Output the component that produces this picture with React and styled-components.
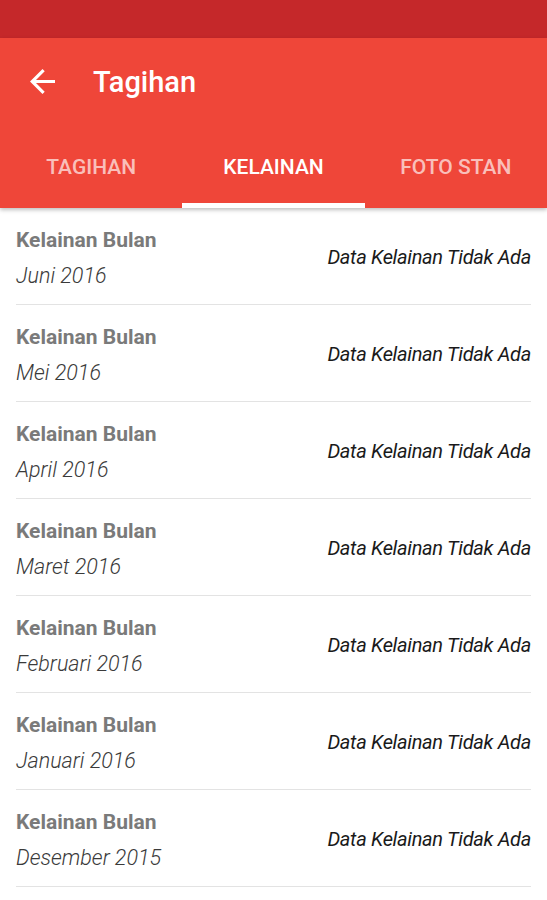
import React from 'react'
import styled, { createGlobalStyle } from 'styled-components'

const GlobalStyle = createGlobalStyle`
  body {
    margin: 0;
    background: #ffffff;
    font-family: Roboto, "Noto Sans", sans-serif;
  }
`

const Screen = styled.div`
  width: 547px;
  height: 900px;
  display: flex;
  flex-direction: column;
  background: #ffffff;
  overflow: hidden;
`

const StatusBar = styled.div`
  height: 38px;
  background: #c5282a;
  flex-shrink: 0;
`

const AppBar = styled.div`
  background: #ef4639;
  display: flex;
  flex-direction: column;
  box-shadow: 0 2px 4px rgba(0, 0, 0, 0.25);
  position: relative;
  z-index: 1;
`

const Toolbar = styled.div`
  height: 86px;
  display: flex;
  align-items: center;
  padding-left: 30px;
  gap: 38px;
`

const BackButton = styled.div`
  width: 25px;
  height: 25px;
  display: flex;
  align-items: center;
  justify-content: center;
  margin-top: 1px;
`

const Title = styled.h1`
  margin: 0;
  font-size: 29px;
  font-weight: 500;
  color: #ffffff;
  margin-top: 2px;
`

const Tabs = styled.div`
  display: grid;
  grid-template-columns: repeat(3, 1fr);
  height: 84px;
`

const Tab = styled.div`
  display: flex;
  align-items: center;
  justify-content: center;
  font-size: 21px;
  font-weight: 500;
  color: ${p => (p.$active ? '#ffffff' : 'rgba(255, 255, 255, 0.68)')};
  border-bottom: 5px solid ${p => (p.$active ? '#ffffff' : 'transparent')};
  padding-top: 6px;
`

const List = styled.div`
  display: flex;
  flex-direction: column;
  padding: 0 16px;
`

const Row = styled.div`
  height: 96px;
  display: flex;
  align-items: center;
  justify-content: space-between;
  border-bottom: 1px solid #e3e3e3;
`

const Month = styled.div`
  display: flex;
  flex-direction: column;
  gap: 11px;
  margin-top: 3px;
`

const Label = styled.div`
  font-size: 21px;
  font-weight: 700;
  color: #7a7a7a;
`

const Period = styled.div`
  font-size: 21.5px;
  font-weight: 300;
  font-style: italic;
  color: #3a3a3a;
`

const Status = styled.div`
  font-size: 20px;
  font-style: italic;
  color: #1a1a1a;
  letter-spacing: -0.3px;
  margin-top: 1px;
`

const months = [
  'Juni 2016',
  'Mei 2016',
  'April 2016',
  'Maret 2016',
  'Februari 2016',
  'Januari 2016',
  'Desember 2015',
]

const App = () => {
  return (
    <Screen>
      <GlobalStyle />
      <StatusBar />
      <AppBar>
        <Toolbar>
          <BackButton>
            <svg width="25" height="25" viewBox="4 4 16 16" fill="#ffffff">
              <path d="M20 11H7.83l5.59-5.59L12 4l-8 8 8 8 1.41-1.41L7.83 13H20v-2z" />
            </svg>
          </BackButton>
          <Title>Tagihan</Title>
        </Toolbar>
        <Tabs>
          <Tab>TAGIHAN</Tab>
          <Tab $active>KELAINAN</Tab>
          <Tab>FOTO STAN</Tab>
        </Tabs>
      </AppBar>
      <List>
        {months.map(m => (
          <Row key={m}>
            <Month>
              <Label>Kelainan Bulan</Label>
              <Period>{m}</Period>
            </Month>
            <Status>Data Kelainan Tidak Ada</Status>
          </Row>
        ))}
      </List>
    </Screen>
  )
}

export default App
